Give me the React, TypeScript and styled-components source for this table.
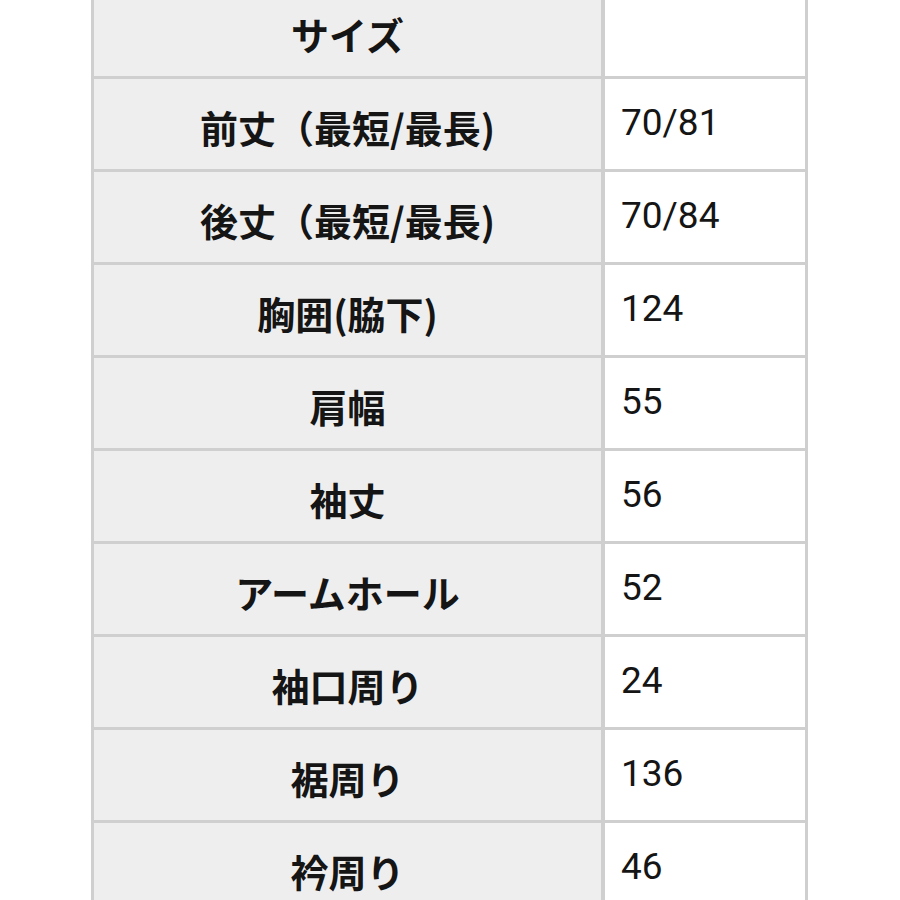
import styled, { createGlobalStyle } from 'styled-components'

const GlobalStyle = createGlobalStyle`
  html, body {
    margin: 0;
    padding: 0;
    background: #ffffff;
  }
  body {
    width: 900px;
    height: 900px;
    overflow: hidden;
  }
`

const rows: [string, string][] = [
  ['サイズ', ''],
  ['前丈（最短/最長)', '70/81'],
  ['後丈（最短/最長)', '70/84'],
  ['胸囲(脇下)', '124'],
  ['肩幅', '55'],
  ['袖丈', '56'],
  ['アームホール', '52'],
  ['袖口周り', '24'],
  ['裾周り', '136'],
  ['衿周り', '46'],
]

export default function App() {
  return (
    <>
      <GlobalStyle />
      <Page>
        <SizeTable>
          {rows.map(([label, value]) => (
            <Row key={label}>
              <Label>{label}</Label>
              <Value>{value}</Value>
            </Row>
          ))}
        </SizeTable>
      </Page>
    </>
  )
}

const Page = styled.div`
  padding-left: 91px;
  margin-top: -17px;
`

const SizeTable = styled.div`
  display: grid;
  grid-template-columns: 507px 200px;
  column-gap: 4px;
  row-gap: 3px;
  width: 711px;
  padding: 3px;
  background: #cfcfcf;
`

const Row = styled.div`
  display: contents;
`

const Label = styled.div`
  height: 90px;
  display: flex;
  align-items: center;
  justify-content: center;
  background: #eeeeee;
  color: #151515;
  font-family: 'Noto Sans CJK JP', 'Noto Sans', sans-serif;
  font-weight: 700;
  font-size: 38px;
  padding-top: 5px;
  box-sizing: border-box;
`

const Value = styled.div`
  height: 90px;
  display: flex;
  align-items: center;
  background: #ffffff;
  color: #151515;
  font-family: Roboto, 'Noto Sans CJK JP', sans-serif;
  font-size: 37px;
  padding-left: 16px;
  padding-bottom: 3px;
  box-sizing: border-box;
`
